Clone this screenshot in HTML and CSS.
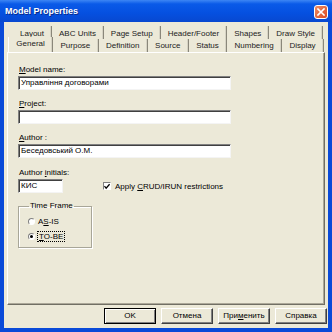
FILE: index.html
```html
<!DOCTYPE html>
<html lang="en">
<head>
  <meta charset="UTF-8">
  <title>Model Properties</title>
  <link rel="stylesheet" href="styles.css">
</head>
<body>
  <div class="window">
    <div class="titlebar">
      <span class="title">Model Properties</span>
      <span class="close">
        <svg width="8" height="8" viewBox="0 0 8 8"><path d="M1 1 L7 7 M7 1 L1 7" stroke="#fff" stroke-width="1.6" stroke-linecap="square"/></svg>
      </span>
    </div>
    <div class="client">
      <div class="tabs">
        <div class="tab-row back">
          <div class="tab">Layout</div>
          <div class="tab">ABC Units</div>
          <div class="tab">Page Setup</div>
          <div class="tab">Header/Footer</div>
          <div class="tab">Shapes</div>
          <div class="tab">Draw Style</div>
        </div>
        <div class="tab-row front">
          <div class="tab active">General</div>
          <div class="tab">Purpose</div>
          <div class="tab">Definition</div>
          <div class="tab">Source</div>
          <div class="tab">Status</div>
          <div class="tab">Numbering</div>
          <div class="tab">Display</div>
        </div>
      </div>
      <div class="panel">
        <div class="field">
          <label><u>M</u>odel name:</label>
          <div class="input">Управління договорами</div>
        </div>
        <div class="field">
          <label><u>P</u>roject:</label>
          <div class="input"></div>
        </div>
        <div class="field">
          <label><u>A</u>uthor :</label>
          <div class="input">Беседовський О.М.</div>
        </div>
        <div class="field">
          <label class="lower">Author <u>i</u>nitials:</label>
          <div class="initials-row">
            <div class="input short">КИС</div>
            <div class="check">
              <span class="box">
                <svg width="7" height="7" viewBox="0 0 7 7"><path d="M0.5 3 L2.5 5.5 L6.5 0.8" stroke="#000" stroke-width="1.5" fill="none"/></svg>
              </span>
              <span>Apply <u>C</u>RUD/IRUN restrictions</span>
            </div>
          </div>
        </div>
        <fieldset class="group">
          <legend>Time Frame</legend>
          <div class="radio"><span class="dot"></span><span>A<u>S</u>-IS</span></div>
          <div class="radio"><span class="dot on"></span><span class="focus"><u>T</u>O-BE</span></div>
        </fieldset>
      </div>
      <div class="buttons">
        <div class="btn default">OK</div>
        <div class="btn">Отмена</div>
        <div class="btn">При<u>м</u>енить</div>
        <div class="btn">Справка</div>
      </div>
    </div>
  </div>
</body>
</html>
```

FILE: styles.css
```css
body {
  margin: 0;
  font-family: "Liberation Sans", Arial, sans-serif;
  font-size: 8px;
  color: #000;
}
.window {
  width: 332px;
  height: 332px;
  display: flex;
  flex-direction: column;
  background: #0a4ad8;
}
.titlebar {
  height: 22px;
  display: flex;
  align-items: center;
  justify-content: space-between;
  padding: 0 4px 0 5px;
  background: linear-gradient(#3d86f4 0%, #0a5ae8 18%, #0550e0 60%, #0848d0 100%);
  box-sizing: border-box;
}
.title {
  color: #fff;
  font-weight: bold;
  font-size: 9px;
  text-shadow: 1px 1px 0 #0a2c8c;
}
.close {
  width: 14px;
  height: 14px;
  box-sizing: border-box;
  border: 1px solid #fff;
  border-radius: 3px;
  background: linear-gradient(135deg, #f08c62, #d94a22);
  display: flex;
  align-items: center;
  justify-content: center;
  margin-top: 1px;
}
.client {
  flex: 1;
  margin: 0 4px 4px 4px;
  background: #ece9d8;
  display: flex;
  flex-direction: column;
}
.tabs {
  padding-top: 4px;
}
.tab-row {
  display: flex;
  height: 13px;
}
.tab-row.back {
  margin-left: 9px;
  width: 310px;
}
.tab-row.front {
  margin-left: 4px;
  width: 316px;
}
.tab {
  flex: 1 1 auto;
  text-align: center;
  line-height: 15px;
  height: 13px;
  white-space: nowrap;
  color: #222;
  border-right: 1px solid #8a877a;
  box-shadow: inset -1px 0 0 #d6d3c4;
}
.tab-row.front .tab {
  line-height: 14px;
}
.tab-row.front .tab.active {
  margin-top: -2px;
  height: 15px;
  line-height: 13px;
  position: relative;
  z-index: 1;
  background: #ece9d8;
  border-left: 1px solid #fff;
}
.panel {
  flex: 1;
  margin: 0 3px 0 3px;
  border-top: 1px solid #fff;
  border-left: 1px solid #fff;
  border-right: 1px solid #716f64;
  border-bottom: 1px solid #716f64;
  box-shadow: inset -1px -1px 0 #aca899;
  padding: 11px 0 0 10px;
}
.field {
  margin-bottom: 8px;
}
.field label {
  display: block;
  line-height: 11px;
  margin-bottom: 1px;
  padding-left: 1px;
}
.field label.lower {
  line-height: 13px;
  margin-bottom: 0;
}
.input {
  width: 213px;
  height: 14px;
  box-sizing: border-box;
  background: #fff;
  border-top: 1px solid #808080;
  border-left: 1px solid #808080;
  border-right: 1px solid #f4f4f4;
  border-bottom: 1px solid #f4f4f4;
  box-shadow: inset 1px 1px 0 #404040;
  padding-left: 2px;
  line-height: 12px;
  white-space: nowrap;
}
.input.short {
  width: 45px;
}
.initials-row {
  display: flex;
  align-items: center;
}
.check {
  display: flex;
  align-items: center;
  gap: 4px;
  margin-left: 40px;
}
.box {
  width: 8px;
  height: 8px;
  box-sizing: border-box;
  background: #fff;
  border: 1px solid;
  border-color: #808080 #fff #fff #808080;
  display: flex;
  align-items: center;
  justify-content: center;
}
.group {
  width: 74px;
  height: 47px;
  box-sizing: border-box;
  margin: 5px 0 0 0;
  padding: 3px 0 0 9px;
  border: 1px solid #a8a698;
  box-shadow: inset 1px 1px 0 #fff, 1px 1px 0 #fff;
}
.group legend {
  padding: 0 1px;
  margin-left: 1px;
  line-height: 10px;
}
.radio {
  display: flex;
  align-items: center;
  gap: 3px;
  height: 15px;
}
.dot {
  width: 7px;
  height: 7px;
  box-sizing: border-box;
  border-radius: 50%;
  background: #fff;
  border: 1px solid;
  border-color: #808080 #fff #fff #808080;
  display: flex;
  align-items: center;
  justify-content: center;
}
.dot.on::after {
  content: "";
  width: 3px;
  height: 3px;
  border-radius: 50%;
  background: #000;
}
.focus {
  outline: 1px dotted #000;
  padding: 0 1px;
  line-height: 9px;
}
.buttons {
  display: flex;
  justify-content: flex-end;
  gap: 5px;
  margin: 3px 1px 4px 0;
}
.btn {
  width: 52px;
  height: 16px;
  box-sizing: border-box;
  text-align: center;
  line-height: 14px;
  border: 1px solid;
  border-color: #fff #404040 #404040 #fff;
  box-shadow: inset -1px -1px 0 #808080;
}
.btn.default {
  border: 1px solid #000;
  box-shadow: inset 1px 1px 0 #fff, inset -1px -1px 0 #808080;
}
```
